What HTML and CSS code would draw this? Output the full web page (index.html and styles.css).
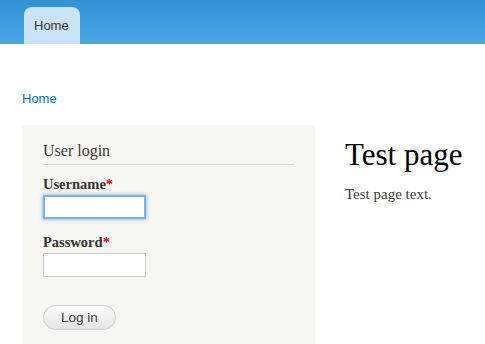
FILE: index.html
```html
<!DOCTYPE html>
<html lang="en">
<head>
  <meta charset="UTF-8">
  <meta name="viewport" content="width=device-width, initial-scale=1.0">
  <title>Test page</title>
  <link rel="stylesheet" href="styles.css">
</head>
<body>
  <div class="header">
    <a class="tab" href="#">Home</a>
  </div>
  <div class="page">
    <div class="breadcrumb"><a href="#">Home</a></div>
    <div class="columns">
      <div class="sidebar">
        <h2>User login</h2>
        <form class="login-form">
          <label for="name">Username<span class="req">*</span></label>
          <input type="text" id="name" class="focused">
          <label for="pass">Password<span class="req">*</span></label>
          <input type="password" id="pass">
          <button type="button">Log in</button>
        </form>
      </div>
      <div class="content">
        <h1>Test page</h1>
        <p>Test page text.</p>
      </div>
    </div>
  </div>
</body>
</html>
```

FILE: styles.css
```css
body { margin: 0; font-family: "Liberation Serif", serif; color: #3b3b3b; }
a { text-decoration: none; }

.header { height: 44px; box-sizing: border-box; padding: 7px 0 0 24px; background: linear-gradient(#3392d6, #48a8e4); }
.tab { display: inline-block; height: 37px; box-sizing: border-box; padding: 11px 11px 0 10px; font: 13px/16px "Liberation Sans", sans-serif; color: #333; background: #c9e3f5; border-radius: 8px 8px 0 0; }

.page { padding: 0 22px; }
.breadcrumb { margin-top: 45px; font: 13px/20px "Liberation Sans", sans-serif; }
.breadcrumb a { color: #0071b3; }

.columns { display: flex; gap: 30px; margin-top: 16px; }
.sidebar { width: 293px; box-sizing: border-box; padding: 16px 21px 14px; background: #f6f6f2; }
.sidebar h2 { margin: 0; padding-bottom: 3px; border-bottom: 1px solid #d6d6d6; font-size: 16px; line-height: 20px; font-weight: normal; color: #3b3b3b; }

.login-form { display: flex; flex-direction: column; align-items: flex-start; margin-top: 10px; }
.login-form label { font-size: 14.5px; line-height: 18px; font-weight: bold; color: #333; margin-bottom: 2px; }
.login-form .req { color: #e00; }
.login-form input { width: 103px; height: 24px; box-sizing: border-box; margin: 0 0 14px; border: 1px solid #ccc; background: #fff; padding: 2px 4px; }
.login-form input.focused { border: 2px solid #7db0e3; box-shadow: 0 0 3px 1px #a6c9ee; outline: none; }
.login-form button { margin-top: 14px; width: 73px; height: 25px; border: 1px solid #cfcfcf; border-radius: 13px; background: linear-gradient(#fdfdfd, #e3e3e3); font: 13.5px "Liberation Sans", sans-serif; color: #3a3a3a; padding: 0; }

.content h1 { margin: 12px 0 0; font-size: 31px; line-height: 36px; font-weight: normal; color: #000; }
.content p { margin: 11px 0 0; font-size: 15px; line-height: 20px; }
```
